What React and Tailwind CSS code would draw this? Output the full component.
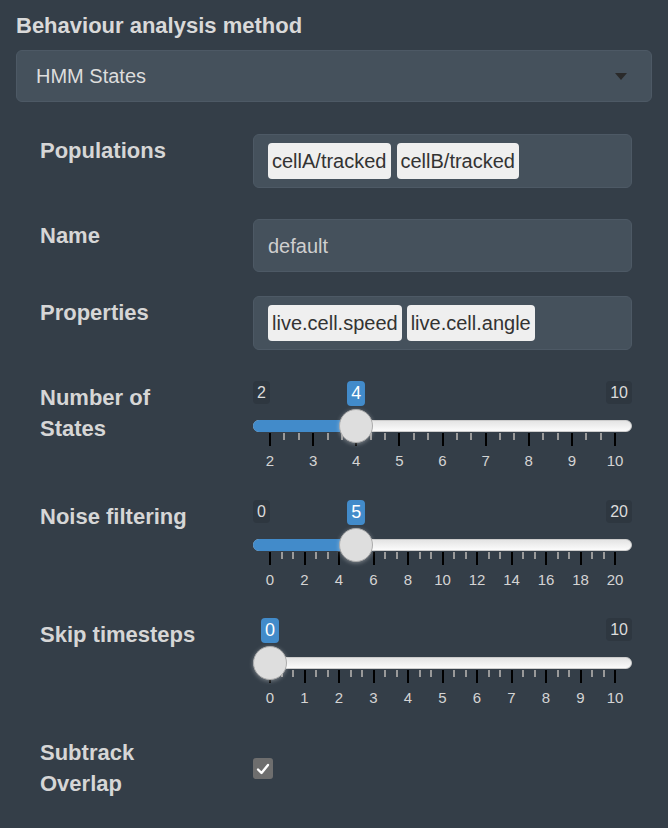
import React from "react";

const TRACK_W = 379;
const HALF = 17;
const SPAN = TRACK_W - 2 * HALF;

function Slider({ min, max, value, labels, intervals }) {
  const frac = (value - min) / (max - min);
  const pos = HALF + frac * SPAN;
  const ticks = [];
  for (let i = 0; i <= intervals; i++) {
    const x = HALF + (i / intervals) * SPAN;
    ticks.push({ x, major: true });
    if (i < intervals) {
      const step = SPAN / intervals;
      ticks.push({ x: x + step / 3, major: false });
      ticks.push({ x: x + (2 * step) / 3, major: false });
    }
  }
  return (
    <div className="relative h-[110px] w-[379px]">
      {value !== min && (
        <div className="absolute left-0 top-0 h-[23px] px-[4px] rounded-[4px] bg-[#2e3740] text-[16px] leading-[23px] text-[#dcdcdc]">
          {min}
        </div>
      )}
      <div className="absolute right-0 top-0 h-[23px] px-[4px] rounded-[4px] bg-[#2e3740] text-[16px] leading-[23px] text-[#dcdcdc]">
        {max}
      </div>
      <div className="absolute left-0 right-0 top-[39px] h-[12px] rounded-full border border-[#cccccc] bg-gradient-to-b from-[#e4e4e4] to-[#fbfbfb]" />
      <div
        className="absolute left-0 top-[39px] h-[12px] rounded-l-full bg-[#428bca]"
        style={{ width: `${pos}px` }}
      />
      {ticks.map((t, i) => (
        <div
          key={i}
          className={
            t.major
              ? "absolute top-[52px] h-[13px] w-[2px] bg-black"
              : "absolute top-[52px] h-[7px] w-[2px] bg-[#9a9a9a]"
          }
          style={{ left: `${t.x - 1}px` }}
        />
      ))}
      {labels.map((l, i) => (
        <div
          key={i}
          className="absolute top-[70px] -translate-x-1/2 text-[15px] leading-[20px] text-[#d4d4d4]"
          style={{ left: `${HALF + (i / (labels.length - 1)) * SPAN}px` }}
        >
          {l}
        </div>
      ))}
      <div
        className="absolute top-[28px] h-[34px] w-[34px] rounded-full border border-[#ababab] bg-[#dedede] shadow-[0_1px_4px_rgba(255,255,255,0.35)]"
        style={{ left: `${pos - HALF}px` }}
      />
      <div
        className="absolute top-0 h-[25px] -translate-x-1/2 rounded-[4px] bg-[#428bca] px-[4px] text-[18px] leading-[25px] text-white"
        style={{ left: `${pos}px` }}
      >
        {value}
      </div>
    </div>
  );
}

function Tag({ children }) {
  return (
    <span className="h-[36px] rounded-[4px] bg-[#efefef] px-[4px] text-[20px] leading-[36px] text-[#333333]">
      {children}
    </span>
  );
}

function Label({ children }) {
  return (
    <div className="pt-[1px] text-[22px] font-bold leading-[31px] text-[#d6d6d6]">
      {children}
    </div>
  );
}

export default function App() {
  const font = "font-['Liberation_Sans',Arial,Helvetica,sans-serif]";
  return (
    <div className={`min-h-[828px] w-[668px] bg-[#343e48] pt-[10px] ${font}`}>
      <div className="px-4 text-[22px] font-bold leading-[32px] text-[#d9d9d9]">
        Behaviour analysis method
      </div>
      <div className="mx-4 mt-[8px] flex h-[52px] items-center justify-between rounded-[6px] border border-[#4d5965] bg-[#45515c] pl-[19px] pr-[24px]">
        <span className="text-[20px] text-[#dddddd]">HMM States</span>
        <span className="h-0 w-0 border-l-[6px] border-r-[6px] border-t-[7px] border-l-transparent border-r-transparent border-t-[#2a2a2a]" />
      </div>

      <div className="mt-[32px] pl-[40px] pr-[36px]">
        <div className="grid grid-cols-[213px_379px]">
          <Label>Populations</Label>
          <div className="flex h-[54px] items-center gap-[6px] rounded-[6px] border border-[#4d5965] bg-[#45515c] px-[14px]">
            <Tag>cellA/tracked</Tag>
            <Tag>cellB/tracked</Tag>
          </div>
        </div>

        <div className="mt-[31px] grid grid-cols-[213px_379px]">
          <Label>Name</Label>
          <div className="flex h-[53px] items-center rounded-[6px] border border-[#4d5965] bg-[#45515c] px-[14px]">
            <span className="text-[20px] text-[#cfcfcf]">default</span>
          </div>
        </div>

        <div className="mt-[24px] grid grid-cols-[213px_379px]">
          <Label>Properties</Label>
          <div className="flex h-[54px] items-center gap-[5px] rounded-[6px] border border-[#4d5965] bg-[#45515c] px-[14px]">
            <Tag>live.cell.speed</Tag>
            <Tag>live.cell.angle</Tag>
          </div>
        </div>

        <div className="mt-[31px] grid h-[119px] grid-cols-[213px_379px]">
          <Label>
            Number of
            <br />
            States
          </Label>
          <Slider min={2} max={10} value={4} intervals={8} labels={[2, 3, 4, 5, 6, 7, 8, 9, 10]} />
        </div>

        <div className="grid h-[118px] grid-cols-[213px_379px]">
          <Label>Noise filtering</Label>
          <Slider min={0} max={20} value={5} intervals={10} labels={[0, 2, 4, 6, 8, 10, 12, 14, 16, 18, 20]} />
        </div>

        <div className="grid h-[118px] grid-cols-[213px_379px]">
          <Label>Skip timesteps</Label>
          <Slider min={0} max={10} value={0} intervals={10} labels={[0, 1, 2, 3, 4, 5, 6, 7, 8, 9, 10]} />
        </div>

        <div className="grid grid-cols-[213px_379px]">
          <Label>
            Subtrack
            <br />
            Overlap
          </Label>
          <div className="pt-[22px]">
            <div className="flex h-[21px] w-[20px] items-center justify-center rounded-[3px] bg-[#6e6e6e]">
              <svg width="14" height="12" viewBox="0 0 14 12" fill="none">
                <path d="M2 6.5 L5.5 10 L12 2" stroke="white" strokeWidth="2.4" strokeLinecap="round" strokeLinejoin="round" />
              </svg>
            </div>
          </div>
        </div>
      </div>
    </div>
  );
}
